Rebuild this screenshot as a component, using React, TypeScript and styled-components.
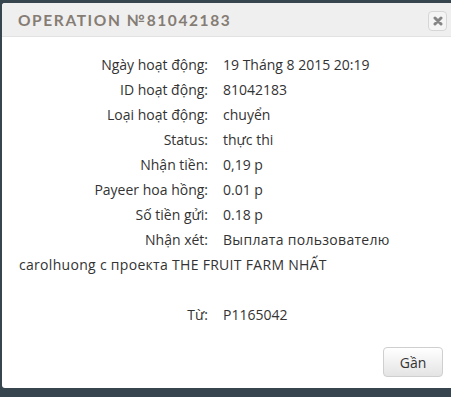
import React from "react";
import styled, { createGlobalStyle } from "styled-components";

const Global = createGlobalStyle`
  html, body { margin: 0; padding: 0; }
  body {
    background: #37464e;
    width: 451px;
    height: 397px;
    overflow: hidden;
    font-family: "Open Sans", "Liberation Sans", sans-serif;
  }
`;

const Dialog = styled.div`
  margin: 3px 0 0 2px;
  width: 449px;
  height: 385px;
  background: #fff;
  border-radius: 3px 0 0 3px;
  display: flex;
  flex-direction: column;
  overflow: hidden;
`;

const Header = styled.div`
  height: 34px;
  background: #efefef;
  border-bottom: 1px solid #e2e2e2;
  display: flex;
  align-items: center;
  justify-content: space-between;
  padding: 0 4px 0 16px;
  box-sizing: border-box;
`;

const Title = styled.div`
  font-family: "Lato", "Liberation Sans", sans-serif;
  font-size: 15.5px;
  font-weight: 700;
  letter-spacing: 1.6px;
  color: #857c74;
`;

const CloseBtn = styled.button`
  width: 19px;
  height: 20px;
  border: 1px solid #d6d6d6;
  border-radius: 4px;
  background: #f4f4f4;
  display: flex;
  align-items: center;
  justify-content: center;
  padding: 0;
  margin-top: 2px;
`;

const Body = styled.div`
  padding: 15px 17px 0;
  font-size: 14px;
  color: #333;
  flex: 1;
`;

const Row = styled.div`
  line-height: 25px;
  white-space: nowrap;
`;

const Label = styled.span`
  display: inline-block;
  width: 189px;
  text-align: right;
  margin-right: 15px;
`;

const Wide = styled.span`
  letter-spacing: 0.3px;
`;

const Spacer = styled.div`
  height: 25px;
`;

const Footer = styled.div`
  display: flex;
  justify-content: flex-end;
  padding: 0 8px 11px 0;
`;

const Button = styled.button`
  width: 60px;
  height: 30px;
  border: 1px solid #cfcfcf;
  border-radius: 4px;
  background: linear-gradient(#ffffff, #e4e4e4);
  font-family: "Open Sans", "Liberation Sans", sans-serif;
  font-size: 14px;
  color: #333;
  padding: 0;
`;

const rows: [string, string][] = [
  ["Ngày hoạt động:", "19 Tháng 8 2015 20:19"],
  ["ID hoạt động:", "81042183"],
  ["Loại hoạt động:", "chuyển"],
  ["Status:", "thực thi"],
  ["Nhận tiền:", "0,19 р"],
  ["Payeer hoa hồng:", "0.01 р"],
  ["Số tiền gửi:", "0.18 р"],
];

export default function App() {
  return (
    <>
      <Global />
      <Dialog>
        <Header>
          <Title>OPERATION №81042183</Title>
          <CloseBtn aria-label="close">
            <svg width="10" height="10" viewBox="0 0 10 10">
              <path d="M2 2 L8 8 M8 2 L2 8" stroke="#858585" strokeWidth="3" strokeLinecap="round" />
            </svg>
          </CloseBtn>
        </Header>
        <Body>
          {rows.map(([l, v]) => (
            <Row key={l}>
              <Label>{l}</Label>
              {v}
            </Row>
          ))}
          <Row>
            <Label>Nhận xét:</Label>
            <Wide>Выплата пользователю</Wide>
          </Row>
          <Row>
            <Wide>carolhuong с проекта THE FRUIT FARM NHẤT</Wide>
          </Row>
          <Spacer />
          <Row>
            <Label>Từ:</Label>
            P1165042
          </Row>
        </Body>
        <Footer>
          <Button>Gần</Button>
        </Footer>
      </Dialog>
    </>
  );
}
